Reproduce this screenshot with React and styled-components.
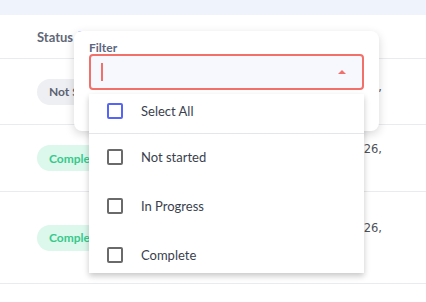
import React from 'react';
import styled, { createGlobalStyle } from 'styled-components';

const GlobalStyle = createGlobalStyle`
  html, body {
    margin: 0;
    padding: 0;
    background: #ffffff;
    font-family: 'Lato', 'Noto Sans', sans-serif;
  }
  * { box-sizing: border-box; }
`;

const ROWS = [
  { status: 'Not Started', tone: 'gray', height: 66, shift: 10 },
  { status: 'Complete', tone: 'green', height: 67, shift: 18 },
  { status: 'Complete', tone: 'green', height: 92, shift: 20 },
];

const OPTIONS = ['Not started', 'In Progress', 'Complete'];

function Checkbox({ active }) {
  return <Box active={active} />;
}

export default function App() {
  return (
    <Page>
      <GlobalStyle />
      <TopBand />
      <HeaderRow>
        <HeaderLabel>Status</HeaderLabel>
        <SortIcon />
      </HeaderRow>
      {ROWS.map((row, idx) => (
        <Row key={idx} height={row.height}>
          <Chip tone={row.tone}>{row.status}</Chip>
          <DateCell shift={row.shift}>Mar 26,</DateCell>
        </Row>
      ))}

      <Card>
        <FieldLabel>Filter</FieldLabel>
        <Input>
          <Caret />
          <Arrow />
        </Input>
        <Dropdown>
          <SelectAllItem>
            <Checkbox active />
            <ItemText>Select All</ItemText>
          </SelectAllItem>
          {OPTIONS.map(option => (
            <Item key={option}>
              <Checkbox />
              <ItemText>{option}</ItemText>
            </Item>
          ))}
        </Dropdown>
      </Card>
    </Page>
  );
}

const Page = styled.div`
  position: relative;
  width: 426px;
  height: 302px;
  overflow: hidden;
  background: #ffffff;
`;

const TopBand = styled.div`
  height: 15px;
  background: #eef3fc;
`;

const HeaderRow = styled.div`
  height: 44px;
  display: flex;
  align-items: center;
  padding-left: 37px;
  gap: 5px;
  border-bottom: 1px solid #e9ebef;
`;

const HeaderLabel = styled.span`
  font-size: 13px;
  font-weight: 700;
  color: #5f6878;
`;

const SortIcon = styled.span`
  width: 8px;
  height: 10px;
  border-radius: 2px;
  background: #7b8cf5;
  margin-top: -2px;
`;

const Row = styled.div`
  height: ${({ height }) => height}px;
  display: flex;
  align-items: center;
  justify-content: space-between;
  padding-left: 37px;
  padding-right: 44px;
  border-bottom: 1px solid #e9ebef;
`;

const Chip = styled.span`
  height: 26px;
  display: inline-flex;
  align-items: center;
  padding: 0 12px;
  border-radius: 13px;
  font-size: 12px;
  font-weight: 700;
  background: ${({ tone }) => (tone === 'green' ? '#dcf7ec' : '#eeeff2')};
  color: ${({ tone }) => (tone === 'green' ? '#37c98b' : '#5b6272')};
`;

const DateCell = styled.span`
  font-family: 'DejaVu Sans', sans-serif;
  font-size: 11.5px;
  line-height: 18px;
  color: #4f525a;
  margin-bottom: ${({ shift }) => shift}px;
`;

const Card = styled.div`
  position: absolute;
  left: 74px;
  top: 31px;
  width: 305px;
  height: 100px;
  padding: 10px 15px 0;
  background: #ffffff;
  border-radius: 8px;
  box-shadow: 0 3px 10px rgba(0, 0, 0, 0.16);
`;

const FieldLabel = styled.div`
  font-size: 12px;
  font-weight: 700;
  color: #5d6680;
  line-height: 13px;
`;

const Input = styled.div`
  position: relative;
  height: 36px;
  border: 2px solid #f2706a;
  border-radius: 4px;
  background: #f7f8fd;
  display: flex;
  align-items: center;
  justify-content: space-between;
  padding: 0 16px 0 10px;
`;

const Caret = styled.span`
  width: 1.5px;
  height: 18px;
  background: #f2706a;
`;

const Arrow = styled.span`
  width: 0;
  height: 0;
  border-left: 4px solid transparent;
  border-right: 4px solid transparent;
  border-bottom: 4px solid #f2706a;
`;

const Dropdown = styled.div`
  position: absolute;
  left: 15px;
  top: 63px;
  width: 275px;
  height: 179px;
  overflow: hidden;
  background: #ffffff;
  box-shadow: 0 3px 6px rgba(0, 0, 0, 0.22);
`;

const Item = styled.div`
  height: 49px;
  display: flex;
  align-items: center;
  gap: 18px;
  padding-left: 18px;
  padding-bottom: 3px;
`;

const SelectAllItem = styled(Item)`
  height: 40px;
  padding-bottom: 5px;
  border-bottom: 1px solid #e4e6ea;
`;

const Box = styled.span`
  width: 16px;
  height: 16px;
  border-radius: 2px;
  border: 2px solid ${({ active }) => (active ? '#5566f6' : '#6a6a6a')};
`;

const ItemText = styled.span`
  font-size: 13px;
  color: #3a3f4e;
`;
